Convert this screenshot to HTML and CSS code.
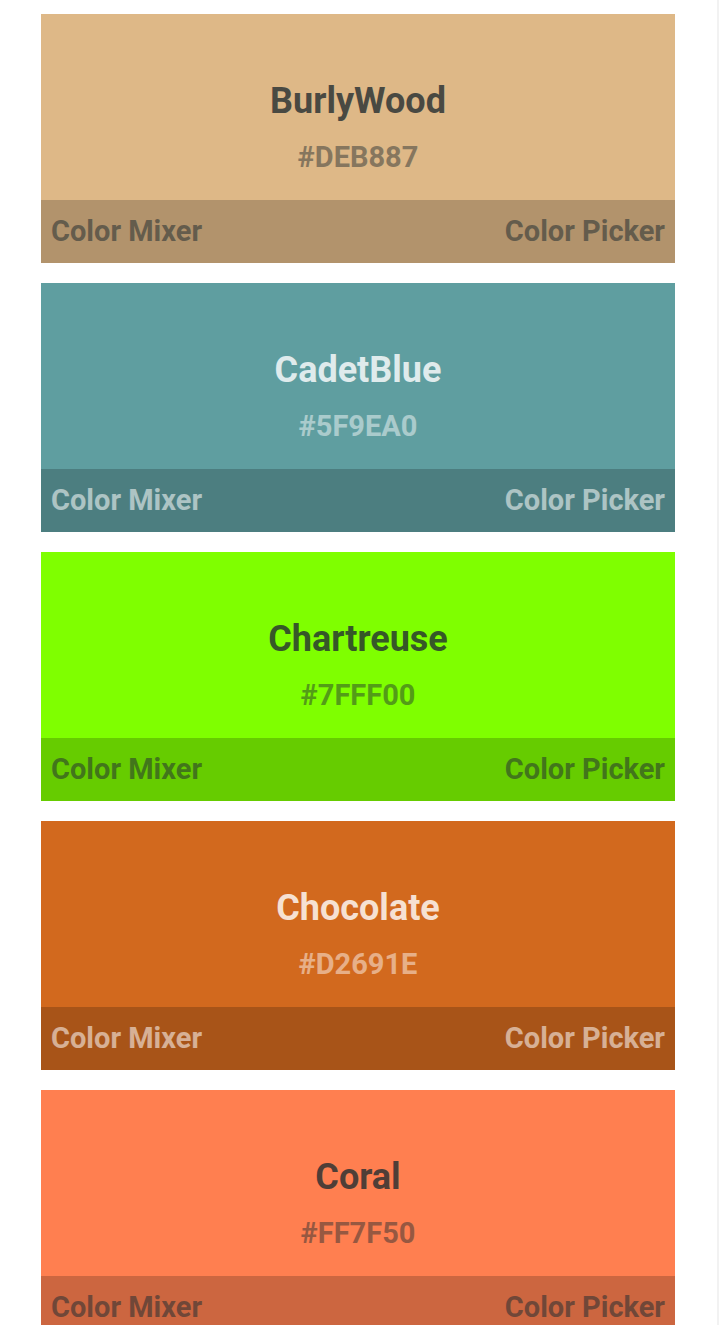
FILE: index.html
```html
<!DOCTYPE html>
<html lang="en">
<head>
<meta charset="utf-8">
<meta name="viewport" content="width=device-width, initial-scale=1">
<title>Color names</title>
<link rel="stylesheet" href="styles.css">
</head>
<body>
<main class="colors">
  <article class="card burlywood dark-text">
    <div class="swatch"><h2 class="name">BurlyWood</h2><p class="hex">#DEB887</p></div>
    <nav class="tools"><a href="#mixer">Color Mixer</a><a href="#picker">Color Picker</a></nav>
  </article>
  <article class="card cadetblue light-text">
    <div class="swatch"><h2 class="name">CadetBlue</h2><p class="hex">#5F9EA0</p></div>
    <nav class="tools"><a href="#mixer">Color Mixer</a><a href="#picker">Color Picker</a></nav>
  </article>
  <article class="card chartreuse dark-text">
    <div class="swatch"><h2 class="name">Chartreuse</h2><p class="hex">#7FFF00</p></div>
    <nav class="tools"><a href="#mixer">Color Mixer</a><a href="#picker">Color Picker</a></nav>
  </article>
  <article class="card chocolate light-text">
    <div class="swatch"><h2 class="name">Chocolate</h2><p class="hex">#D2691E</p></div>
    <nav class="tools"><a href="#mixer">Color Mixer</a><a href="#picker">Color Picker</a></nav>
  </article>
  <article class="card coral dark-text">
    <div class="swatch"><h2 class="name">Coral</h2><p class="hex">#FF7F50</p></div>
    <nav class="tools"><a href="#mixer">Color Mixer</a><a href="#picker">Color Picker</a></nav>
  </article>
</main>
</body>
</html>
```

FILE: styles.css
```css
* { box-sizing: border-box; }
html { scrollbar-width: none; }
body {
  margin: 0;
  background: #fff;
  font-family: Roboto, "Liberation Sans", sans-serif;
  font-weight: 700;
}
.colors {
  display: flex;
  flex-direction: column;
  gap: 20px;
  padding: 14px 42px 20px 41px;
  border-right: 2px solid #f2f2f2;
}
.card { background: var(--color); color: var(--ink); }
.swatch { padding: 64px 10px 20px; text-align: center; }
.name { margin: 0; font-size: 36px; line-height: 46px; opacity: 0.8; }
.hex { margin: 10px 0 0; font-size: 29px; line-height: 46px; opacity: 0.47; }
.tools {
  display: flex;
  justify-content: space-between;
  padding: 8px 10px;
  background: var(--shade);
  font-size: 29px;
  line-height: 47px;
}
.tools a { color: inherit; text-decoration: none; opacity: 0.54; }
.dark-text { --ink: #242e32; }
.light-text { --ink: #fff; }
.burlywood { --color: #deb887; --shade: #b2936c; }
.cadetblue { --color: #5f9ea0; --shade: #4c7e80; }
.chartreuse { --color: #7fff00; --shade: #66cc00; }
.chocolate { --color: #d2691e; --shade: #a85418; }
.coral { --color: #ff7f50; --shade: #cc6640; }
```
